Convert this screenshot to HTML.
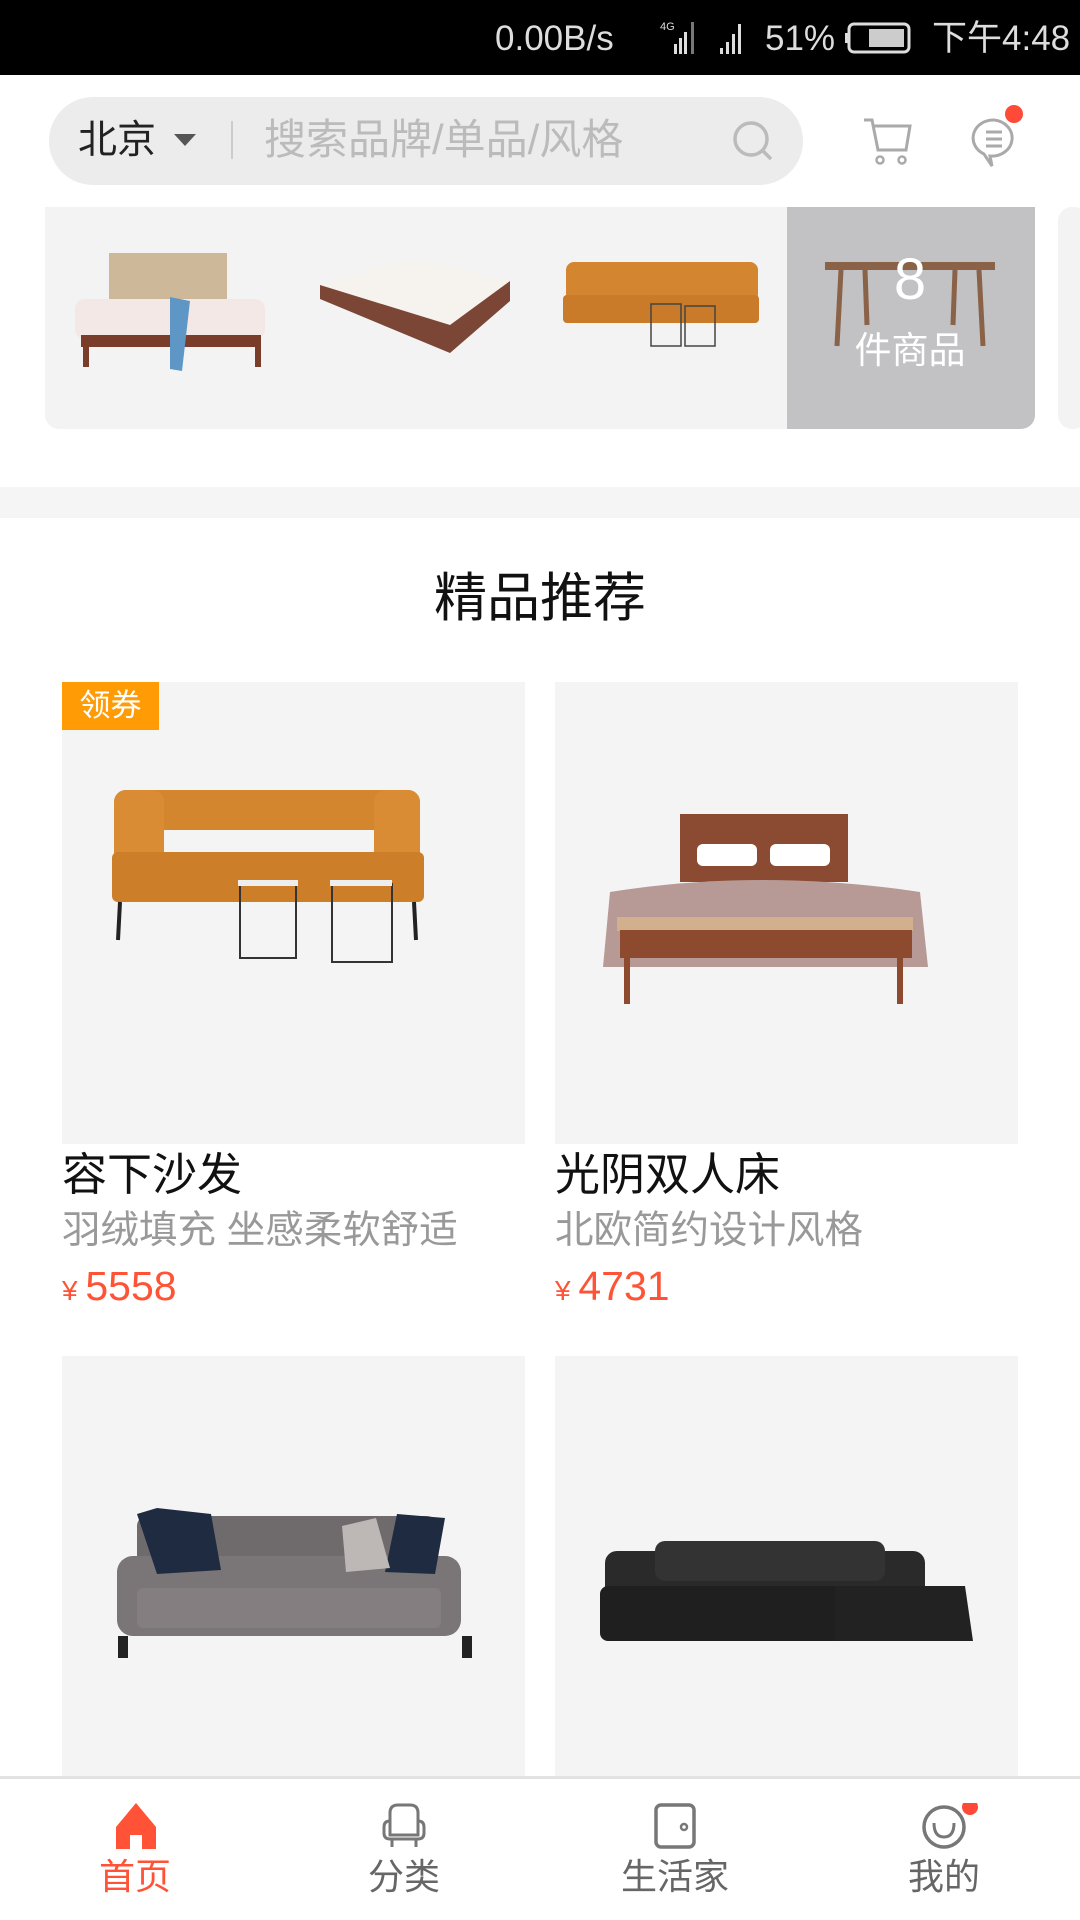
<!DOCTYPE html>
<html><head><meta charset="utf-8"><style>
*{margin:0;padding:0;box-sizing:border-box}
body{width:1080px;height:1920px;overflow:hidden;background:#fff;font-family:"Liberation Sans","Noto Sans CJK SC",sans-serif;position:relative}
.a{position:absolute}
.sb{left:0;top:0;width:1080px;height:75px;background:#000;color:#fff;font-size:35px}
.t{white-space:nowrap;line-height:1}
.img{background:#f4f4f5}
.title{font-size:45px;color:#111}
.sub{font-size:38.5px;color:#999}
.price{font-size:41px;color:#ff5336}
.nav{font-size:36px;color:#666;text-align:center;width:200px}
</style></head><body>
<div class="a sb">
 <div class="a t" style="left:495px;top:21px;color:#ddd">0.00B/s</div>
 <svg class="a" style="left:658px;top:18px" width="40" height="40"><text x="2" y="12" font-size="11" fill="#ddd" font-family="Liberation Sans">4G</text><rect x="16" y="26" width="3" height="10" fill="#ddd"/><rect x="21" y="20" width="3" height="16" fill="#ddd"/><rect x="26" y="14" width="3" height="22" fill="#ddd"/><rect x="33" y="4" width="3" height="32" fill="#777"/></svg>
 <svg class="a" style="left:718px;top:18px" width="32" height="40"><rect x="2" y="30" width="3" height="6" fill="#ddd"/><rect x="8" y="24" width="3" height="12" fill="#ddd"/><rect x="14" y="16" width="3" height="20" fill="#ddd"/><rect x="20" y="6" width="3" height="30" fill="#ddd"/></svg>
 <div class="a t" style="left:765px;top:21px;color:#ddd">51%</div>
 <svg class="a" style="left:845px;top:22px" width="70" height="34"><rect x="4" y="2" width="60" height="28" rx="5" fill="none" stroke="#ddd" stroke-width="3"/><rect x="0" y="11" width="4" height="10" fill="#ddd"/><rect x="24" y="7" width="35" height="18" fill="#ccc"/></svg>
 <div class="a t" style="left:932px;top:21px;color:#ddd">下午4:48</div>
</div>
<div class="a" style="left:49px;top:97px;width:754px;height:88px;border-radius:44px;background:#ececec"></div>
<div class="a t" style="left:78px;top:121px;font-size:39px;color:#222">北京</div>
<svg class="a" style="left:172px;top:132px" width="26" height="16"><path d="M2 2h22L13 14z" fill="#555"/></svg>
<div class="a" style="left:231px;top:121px;width:2px;height:38px;background:#ccc"></div>
<div class="a t" style="left:264px;top:119px;font-size:42px;color:#bbb">搜索品牌/单品/风格</div>
<svg class="a" style="left:730px;top:118px" width="46" height="46"><circle cx="21" cy="21" r="16" fill="none" stroke="#bbb" stroke-width="3.5"/><path d="M32 32l9 9" stroke="#bbb" stroke-width="3.5"/></svg>
<svg class="a" style="left:862px;top:116px" width="52" height="52"><path d="M2 4h8l6 30h28l4-24H12" fill="none" stroke="#aaa" stroke-width="3"/><circle cx="18" cy="44" r="3.5" fill="none" stroke="#aaa" stroke-width="2.5"/><circle cx="40" cy="44" r="3.5" fill="none" stroke="#aaa" stroke-width="2.5"/></svg>
<svg class="a" style="left:970px;top:112px" width="52" height="58"><path d="M24 8a20 18 0 1 1-4 36l2 10-8-12A20 18 0 0 1 24 8z" fill="none" stroke="#aaa" stroke-width="3"/><path d="M16 20h16M16 27h16M16 34h16" stroke="#aaa" stroke-width="3"/></svg>
<div class="a" style="left:1005px;top:105px;width:18px;height:18px;border-radius:50%;background:#ff4a37"></div>

<div class="a" style="left:45px;top:207px;width:990px;height:222px;border-radius:0 0 14px 14px;background:#f3f3f3;overflow:hidden">
 <div class="a" style="left:742px;top:0;width:248px;height:222px;background:#c2c1c3"></div>
</div>
<div class="a" style="left:1058px;top:207px;width:30px;height:222px;border-radius:14px;background:#f3f3f3"></div>
<svg class="a" style="left:45px;top:207px" width="990" height="222">
 <rect x="64" y="46" width="118" height="60" fill="#cdb99a"/><rect x="30" y="92" width="190" height="40" rx="10" fill="#f4e8e6"/><rect x="36" y="128" width="180" height="12" fill="#7a3d2a"/><rect x="38" y="130" width="6" height="30" fill="#7a3d2a"/><rect x="210" y="130" width="6" height="30" fill="#7a3d2a"/><path d="M125 90l20 4-8 70-12-2z" fill="#5e97c6"/>
 <path d="M275 78l90-26 100 22-60 44z" fill="#f6f2ee"/><path d="M275 78v14l130 54 60-52v-20l-60 44z" fill="#7b4636"/>
 <rect x="521" y="55" width="192" height="40" rx="8" fill="#d3862f"/><rect x="518" y="88" width="196" height="28" rx="4" fill="#c97b29"/><path d="M606 97h30v42h-30zM640 99h30v40h-30z" fill="none" stroke="#444" stroke-width="1.5"/>
 <rect x="780" y="55" width="170" height="8" fill="#8a6248"/><path d="M796 63l-4 76M934 63l4 76M820 63l2 55M910 63l-2 55" stroke="#8a6248" stroke-width="5"/>
 <text x="865" y="92" text-anchor="middle" font-size="58" fill="#fff" font-family="Liberation Sans">8</text>
 <text x="865" y="156" text-anchor="middle" font-size="37" fill="#fff" font-family="Liberation Sans,Noto Sans CJK SC,sans-serif">件商品</text>
</svg>

<div class="a" style="left:0;top:487px;width:1080px;height:31px;background:#f5f5f5"></div>
<div class="a t" style="left:0;width:1080px;top:572px;text-align:center;font-size:53px;color:#111">精品推荐</div>

<div class="a img" style="left:62px;top:682px;width:463px;height:462px"></div>
<div class="a img" style="left:555px;top:682px;width:463px;height:462px"></div>
<div class="a t" style="left:62px;top:682px;width:97px;height:48px;background:#ff9c05;color:#fff;font-size:31px;line-height:48px;text-align:center">领券</div>
<svg class="a" style="left:62px;top:682px" width="463" height="462">
 <rect x="52" y="108" width="306" height="40" rx="12" fill="#d4862e"/><rect x="52" y="108" width="50" height="110" rx="12" fill="#d98c33"/><rect x="312" y="108" width="46" height="110" rx="12" fill="#d98c33"/><rect x="50" y="170" width="312" height="50" rx="6" fill="#cd7e28"/>
 <path d="M58 220l-2 38M352 220l2 38" stroke="#222" stroke-width="4"/>
 <path d="M178 202h56v74h-56zM270 202h60v78h-60z" fill="none" stroke="#333" stroke-width="2"/><rect x="176" y="198" width="60" height="6" fill="#eee"/><rect x="268" y="198" width="62" height="6" fill="#eee"/>
</svg>
<svg class="a" style="left:555px;top:682px" width="463" height="462">
 <rect x="125" y="132" width="168" height="68" fill="#8b4a32"/><rect x="142" y="162" width="60" height="22" rx="6" fill="#fff"/><rect x="215" y="162" width="60" height="22" rx="6" fill="#fff"/>
 <path d="M55 210q150-24 310 0l8 75H48z" fill="#b79a96"/>
 <rect x="62" y="235" width="296" height="14" fill="#d2b08d"/><rect x="65" y="248" width="292" height="28" fill="#8d4a2e"/><path d="M72 276v46M345 276v46" stroke="#8d4a2e" stroke-width="6"/>
</svg>
<div class="a t title" style="left:62px;top:1152px">容下沙发</div>
<div class="a t title" style="left:555px;top:1152px">光阴双人床</div>
<div class="a t sub" style="left:62px;top:1212px">羽绒填充 坐感柔软舒适</div>
<div class="a t sub" style="left:555px;top:1212px">北欧简约设计风格</div>
<div class="a t price" style="left:62px;top:1266px"><span style="font-size:28px">¥ </span>5558</div>
<div class="a t price" style="left:555px;top:1266px"><span style="font-size:28px">¥ </span>4731</div>

<div class="a img" style="left:62px;top:1356px;width:463px;height:430px"></div>
<div class="a img" style="left:555px;top:1356px;width:463px;height:430px"></div>
<svg class="a" style="left:62px;top:1356px" width="463" height="430">
 <rect x="75" y="160" width="300" height="56" rx="10" fill="#6f6a6c"/><rect x="55" y="200" width="344" height="80" rx="16" fill="#7a7577"/><rect x="75" y="232" width="304" height="40" rx="6" fill="#847e80"/>
 <path d="M75 158l20-6 54 6 10 56-64 4z" fill="#1e2b40"/><path d="M335 158l48 4-10 56-50-2z" fill="#1e2b40"/><path d="M280 170l34-8 14 50-44 4z" fill="#bdb7b6"/>
 <rect x="56" y="280" width="10" height="22" fill="#222"/><rect x="400" y="280" width="10" height="22" fill="#222"/>
</svg>
<svg class="a" style="left:555px;top:1356px" width="463" height="430">
 <rect x="50" y="195" width="320" height="50" rx="12" fill="#2a2a2b"/><rect x="45" y="230" width="290" height="55" rx="8" fill="#1f1f20"/><path d="M280 230h130l8 55H280z" fill="#222"/><rect x="100" y="185" width="230" height="40" rx="10" fill="#333"/>
</svg>

<div class="a" style="left:0;top:1776px;width:1080px;height:144px;background:#fff;border-top:3px solid #e2e2e2"></div>
<svg class="a" style="left:112px;top:1803px" width="48" height="46"><path d="M24 0L4 24v22h14V32h12v14h14V24z" fill="#ff5236"/></svg>
<svg class="a" style="left:380px;top:1803px" width="48" height="46"><path d="M10 10q0-8 8-8h12q8 0 8 8v8q6 0 6 6v6q0 6-6 6H10q-6 0-6-6v-6q0-6 6-6zM10 18v14h28V18M12 36v8M36 36v8" fill="none" stroke="#777" stroke-width="3"/></svg>
<svg class="a" style="left:652px;top:1803px" width="48" height="46"><rect x="4" y="2" width="38" height="42" rx="5" fill="none" stroke="#777" stroke-width="3.5"/><circle cx="32" cy="24" r="3" fill="none" stroke="#777" stroke-width="2.5"/></svg>
<svg class="a" style="left:920px;top:1803px" width="60" height="46"><circle cx="24" cy="24" r="20" fill="none" stroke="#777" stroke-width="3.5"/><path d="M14 20q0 14 10 14t10-14" fill="none" stroke="#777" stroke-width="3"/><circle cx="50" cy="4" r="8" fill="#ff4a37"/></svg>
<div class="a t nav" style="left:35px;top:1859px;color:#ff5236">首页</div>
<div class="a t nav" style="left:304px;top:1859px">分类</div>
<div class="a t nav" style="left:575px;top:1859px">生活家</div>
<div class="a t nav" style="left:844px;top:1859px">我的</div>
</body></html>
